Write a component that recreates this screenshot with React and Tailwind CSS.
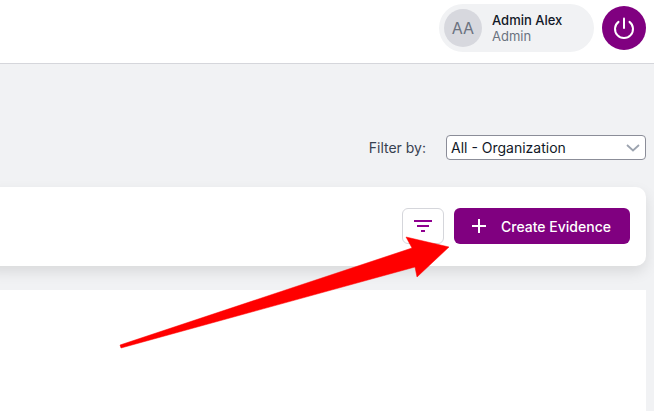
import React from "react";

export default function App() {
  return (
    <div className="relative w-[654px] h-[411px] overflow-hidden bg-[#f1f2f4] font-['Inter',sans-serif]">
      <header className="h-[64px] bg-white border-b border-[#d5d6db] flex items-start justify-end pr-2 pt-1 gap-2">
        <div className="w-[155px] h-[48px] rounded-full bg-[#f1f2f4] flex items-center pl-[5px] gap-[10px]">
          <div className="w-[38px] h-[38px] rounded-full bg-[#d7d8de] flex items-center justify-center text-[16px] text-[#6b7280] tracking-[0.2px]">AA</div>
          <div className="flex flex-col">
            <span className="text-[13px] leading-[16px] font-medium text-[#111827]">Admin Alex</span>
            <span className="text-[13px] leading-[16px] text-[#6b7280]">Admin</span>
          </div>
        </div>
        <div className="w-[44px] h-[44px] mt-[2px] rounded-full bg-[#800080] flex items-center justify-center">
          <svg width="24" height="24" viewBox="0 0 24 24" fill="none" stroke="white" strokeWidth="2" strokeLinecap="round">
            <path d="M12 2.500v9.500" />
            <path d="M17.500 5.900a9 9 0 1 1-11 0" />
          </svg>
        </div>
      </header>

      <div className="h-[96px] pr-2 pt-[71px] flex items-start justify-end gap-5">
        <span className="text-[14px] leading-[25px] text-[#374151]">Filter by:</span>
        <div className="w-[200px] h-[25px] bg-white border border-[#8b8d98] rounded-[4px] flex items-center justify-between pl-1 pr-[5px]">
          <span className="text-[14px] text-[#111827]">All - Organization</span>
          <svg width="14" height="8" viewBox="0 0 14 8" fill="none" stroke="#9ca3af" strokeWidth="1.8">
            <path d="M1 1l6 5.500L13 1" />
          </svg>
        </div>
      </div>

      <div className="mt-[27px] -ml-4 mr-2 h-[79px] bg-white rounded-[10px] shadow-[0_6px_14px_rgba(0,0,0,0.1)] flex items-start justify-end pt-[21px] pr-4 gap-[10px]">
        <div className="w-[42px] h-[36px] bg-white border border-[#d5d6db] rounded-[6px] flex items-center justify-center">
          <svg width="18" height="14" viewBox="0 0 18 14" fill="none" stroke="#8f008f" strokeWidth="2">
            <path d="M0 2h18M3 7h12M7 12h4" />
          </svg>
        </div>
        <button className="w-[176px] h-[36px] bg-[#800080] rounded-[6px] flex items-center pl-[17px] gap-[14px] text-white text-[14px] font-medium">
          <svg width="16" height="16" viewBox="0 0 16 16" fill="none" stroke="white" strokeWidth="2">
            <path d="M8 1v14M1 8h14" />
          </svg>
          Create Evidence
        </button>
      </div>

      <div className="mt-[24px] -ml-4 mr-2 h-[130px] bg-white" />

      <svg className="absolute inset-0" width="654" height="411" viewBox="0 0 654 411">
        <path d="M120 345L412 248L406 237L449 247L417 277L415 267L121 348Z" fill="#ff0000" stroke="#ff0000" strokeWidth="0.5" strokeLinejoin="round" />
      </svg>
    </div>
  );
}
